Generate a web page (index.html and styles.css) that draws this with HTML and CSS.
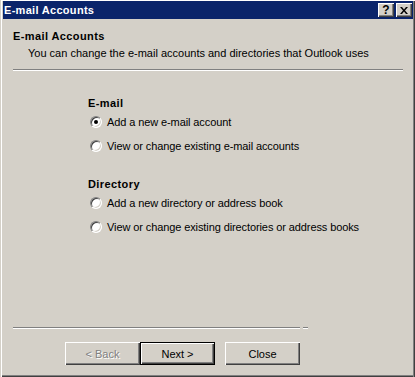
FILE: index.html
```html
<!DOCTYPE html>
<html>
  <head>
    <title>E-mail Accounts</title>
    <link rel="stylesheet" href="styles.css">
  </head>
  <body>
    <div class="window">
      <div class="title-bar">
        <span class="title-text">E-mail Accounts</span>
        <div class="caption-buttons">
          <button class="caption-btn help">?</button>
          <button class="caption-btn close">
            <svg width="8" height="7" viewBox="0 0 8 7">
              <path d="M0 0h2l2 2.5L6 0h2L5 3.5 8 7H6L4 4.5 2 7H0l3-3.5z" fill="#000" />
            </svg>
          </button>
        </div>
      </div>

      <div class="header">
        <h2>E-mail Accounts</h2>
        <p>You can change the e-mail accounts and directories that Outlook uses</p>
        <div class="etched"></div>
      </div>

      <div class="choices">
        <div class="group">
          <h3>E-mail</h3>
          <label class="option">
            <span class="radio checked"></span>
            <span>Add a new e-mail account</span>
          </label>
          <label class="option">
            <span class="radio"></span>
            <span>View or change existing e-mail accounts</span>
          </label>
        </div>
        <div class="group">
          <h3>Directory</h3>
          <label class="option">
            <span class="radio"></span>
            <span>Add a new directory or address book</span>
          </label>
          <label class="option">
            <span class="radio"></span>
            <span>View or change existing directories or address books</span>
          </label>
        </div>
      </div>

      <div class="footer">
        <div class="footer-line">
          <div class="etched long"></div>
          <div class="etched stub"></div>
        </div>
        <div class="buttons">
          <button class="btn disabled">&lt; Back</button>
          <button class="btn default">Next &gt;</button>
          <button class="btn spaced">Close</button>
        </div>
      </div>
    </div>
  </body>
</html>
```

FILE: styles.css
```css
* {
  margin: 0;
  padding: 0;
  box-sizing: border-box;
}

body {
  font-family: "Liberation Sans", Arial, sans-serif;
  font-size: 11px;
  line-height: 13px;
  color: #000;
  background: #d4d0c8;
}

.window {
  width: 415px;
  height: 377px;
  display: flex;
  flex-direction: column;
  background: #d4d0c8;
  padding: 1px 2px 2px 3px;
  box-shadow: inset 1px 0 #d4d0c8, inset 2px 0 #fff, inset 0 1px #fff,
    inset -1px 0 #404040, inset -2px 0 #808080, inset 0 -1px #404040,
    inset 0 -2px #808080;
}

.title-bar {
  height: 18px;
  display: flex;
  justify-content: space-between;
  align-items: center;
  background: #0a246a;
  color: #fff;
  padding-left: 1px;
}

.title-text {
  font-weight: bold;
  letter-spacing: 0.3px;
}

.caption-buttons {
  display: flex;
  gap: 2px;
  margin-right: 1px;
}

.caption-btn {
  width: 16px;
  height: 14px;
  border: none;
  background: #d4d0c8;
  font-family: "Liberation Sans", Arial, sans-serif;
  font-size: 12px;
  font-weight: bold;
  line-height: 12px;
  color: #000;
  display: flex;
  align-items: center;
  justify-content: center;
  box-shadow: inset 1px 1px #fff, inset -1px -1px #404040,
    inset -2px -2px #808080;
}

.caption-btn svg {
  display: block;
}

.header {
  padding: 11px 10px 0;
}

h2,
h3 {
  font-size: 11px;
  font-weight: bold;
  letter-spacing: 0.4px;
}

.header p {
  margin-top: 4px;
  padding-left: 15px;
}

.etched {
  height: 2px;
  border-top: 1px solid #808080;
  border-bottom: 1px solid #fff;
}

.header .etched {
  margin-top: 9px;
}

.choices {
  padding: 26px 0 0 85px;
}

.group + .group {
  margin-top: 24px;
}

.option {
  display: flex;
  align-items: center;
  gap: 5px;
  height: 16px;
  margin-top: 4px;
  padding-left: 2px;
  letter-spacing: -0.1px;
}

.option + .option {
  margin-top: 8px;
}

.radio {
  position: relative;
  width: 12px;
  height: 12px;
  border-radius: 50%;
  background: #fff;
  border: 1px solid;
  border-color: #808080 #fff #fff #808080;
  box-shadow: inset 1px 1px #404040, inset -1px -1px #d4d0c8;
}

.radio.checked:after {
  content: "";
  position: absolute;
  left: 3px;
  top: 3px;
  width: 4px;
  height: 4px;
  border-radius: 50%;
  background: #000;
}

.footer {
  margin-top: auto;
  padding: 0 10px 10px;
}

.footer-line {
  display: flex;
  gap: 3px;
}

.etched.long {
  width: 287px;
}

.etched.stub {
  width: 5px;
}

.buttons {
  display: flex;
  margin-top: 13px;
  padding-left: 52px;
}

.btn {
  width: 75px;
  height: 23px;
  border: none;
  background: #d4d0c8;
  font-family: "Liberation Sans", Arial, sans-serif;
  font-size: 11px;
  color: #000;
  box-shadow: inset 1px 1px #fff, inset -1px -1px #404040,
    inset -2px -2px #808080;
}

.btn.disabled {
  color: #808080;
  text-shadow: 1px 1px #fff;
}

.btn.default {
  box-shadow: inset 0 0 0 1px #000, inset 2px 2px #fff,
    inset -2px -2px #404040, inset -3px -3px #808080;
}

.btn.spaced {
  margin-left: 10px;
}
```
